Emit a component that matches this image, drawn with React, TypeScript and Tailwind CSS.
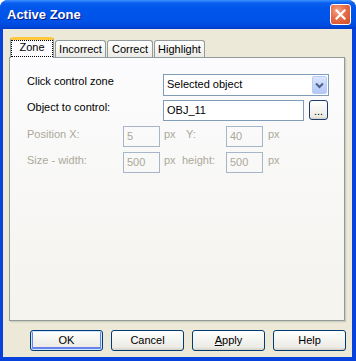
import React from 'react';

const tabs = ['Zone', 'Incorrect', 'Correct', 'Highlight'];

const XpButton: React.FC<{ label: React.ReactNode; isDefault?: boolean }> = ({ label, isDefault }) => (
  <button
    className={
      'w-[73px] h-[21px] rounded-[3px] border border-[#003C74] text-[11px] text-black leading-none ' +
      'bg-[linear-gradient(to_bottom,#FFFFFF_0%,#F4F4F0_45%,#ECEBE6_85%,#D6D0C5_100%)] ' +
      (isDefault ? 'shadow-[inset_0_0_0_1px_#CEE7FF,inset_0_-1px_0_2px_#6982EE]' : '')
    }
  >
    {label}
  </button>
);

const DisabledBox: React.FC<{ value: string }> = ({ value }) => (
  <div className="w-[37px] h-[21px] border border-[#A7B5C8] flex items-center px-[3px] text-[#ACA899]">
    {value}
  </div>
);

const App: React.FC = () => {
  return (
    <div className="w-[356px] h-[361px] bg-white font-['Liberation_Sans',Arial,sans-serif] text-[11px] text-black">
      <div className="w-full h-full flex flex-col rounded-t-[8px] overflow-hidden bg-[#0842DC]">
        {/* title bar */}
        <div className="h-[29px] shrink-0 flex items-center justify-between pl-[7px] pr-[5px] bg-[linear-gradient(to_bottom,#3D95FF_0%,#0A5FF0_10%,#0055EA_30%,#0053E8_70%,#0048DC_90%,#003DC9_100%)]">
          <span className="text-white font-bold text-[13px] [text-shadow:1px_1px_0_#0A1883]">Active Zone</span>
          <div className="w-[21px] h-[21px] rounded-[3px] border border-white flex items-center justify-center bg-[radial-gradient(circle_at_35%_30%,#F4A58A_0%,#E8704C_40%,#D24A25_100%)]">
            <svg width="11" height="11" viewBox="0 0 11 11">
              <path d="M1.5 1.5 L9.5 9.5 M9.5 1.5 L1.5 9.5" stroke="white" strokeWidth="2.2" strokeLinecap="square" />
            </svg>
          </div>
        </div>

        {/* body */}
        <div className="flex-1 flex flex-col bg-[#ECE9D8] ml-[3px] mr-[4px] mb-[4px] pt-[7px]">
          {/* tab strip */}
          <div className="flex items-end gap-[1px] ml-[7px] h-[21px] relative z-10">
            {tabs.map((t, i) =>
              i === 0 ? (
                <div
                  key={t}
                  className="w-[44px] h-[21px] -mb-[1px] rounded-t-[3px] border-x border-[#919B9C] border-t-[3px] border-t-[#FFC83C] bg-[#FCFCFE] flex items-start justify-center pt-[1px]"
                >
                  <span className="w-[40px] h-[15px] text-center leading-[13px] outline outline-1 outline-dotted outline-black">{t}</span>
                </div>
              ) : (
                <div
                  key={t}
                  className={
                    'h-[17px] rounded-t-[3px] border-x border-t border-[#919B9C] bg-[linear-gradient(to_bottom,#FFFFFF,#F3F3EF_60%,#ECEBE6)] flex items-center justify-center px-[5px] ' +
                    (i === 1 ? 'w-[51px]' : i === 2 ? 'w-[46px]' : 'w-[51px]')
                  }
                >
                  {t}
                </div>
              )
            )}
          </div>

          {/* tab panel */}
          <div className="ml-[6px] mr-[7px] h-[264px] border border-[#919B9C] shadow-[1px_1px_0_#D0CEBF,2px_2px_0_#E3E0D0] bg-[linear-gradient(to_bottom,#FCFCFE,#F4F3EE)] pt-[16px] pl-[17px] flex flex-col gap-[5px]">
            <div className="flex h-[21px]">
              <span className="w-[136px] pt-[1px] leading-[13px]">Click control zone</span>
              <div className="w-[166px] h-[22px] border border-[#7F9DB9] bg-white flex items-center justify-between pl-[3px] pr-[1px]">
                <span className="pb-[1px]">Selected object</span>
                <div className="w-[15px] h-[18px] rounded-[2px] border border-[#B6CBF8] bg-[linear-gradient(to_bottom,#DCE6FD,#C1D3FB_60%,#B4C8F7)] flex items-center justify-center">
                  <svg width="9" height="7" viewBox="0 0 9 7">
                    <path d="M1 1.5 L4.5 5 L8 1.5" fill="none" stroke="#4D6185" strokeWidth="2" />
                  </svg>
                </div>
              </div>
            </div>

            <div className="flex h-[21px]">
              <span className="w-[136px] pt-[1px] leading-[13px]">Object to control:</span>
              <div className="w-[141px] h-[21px] border border-[#7F9DB9] bg-white flex items-center px-[3px] pb-[1px]">OBJ_11</div>
              <div className="ml-[5px] w-[19px] h-[20px] rounded-[3px] border border-[#1C3B6E] bg-[linear-gradient(to_bottom,#FFFFFF,#ECEBE6_85%,#D6D0C5)] flex items-end justify-center pb-[2px] leading-none">
                ...
              </div>
            </div>

            <div className="flex h-[21px] text-[#ACA899]">
              <span className="w-[96px] pt-[2px] leading-[13px]">Position X:</span>
              <DisabledBox value="5" />
              <span className="w-[22px] pl-[4px] pt-[2px] leading-[13px]">px</span>
              <span className="w-[44px] pl-[4px] pt-[2px] leading-[13px]">Y:</span>
              <DisabledBox value="40" />
              <span className="pl-[5px] pt-[2px] leading-[13px]">px</span>
            </div>

            <div className="flex h-[21px] text-[#ACA899]">
              <span className="w-[96px] pt-[2px] leading-[13px]">Size - width:</span>
              <DisabledBox value="500" />
              <span className="w-[22px] pl-[4px] pt-[2px] leading-[13px]">px</span>
              <span className="w-[44px] pt-[2px] leading-[13px]">height:</span>
              <DisabledBox value="500" />
              <span className="pl-[5px] pt-[2px] leading-[13px]">px</span>
            </div>
          </div>

          {/* buttons */}
          <div className="flex justify-end gap-[8px] pr-[6px] mt-[9px]">
            <XpButton label="OK" isDefault />
            <XpButton label="Cancel" />
            <XpButton label={<><span className="underline">A</span>pply</>} />
            <XpButton label="Help" />
          </div>
        </div>
      </div>
    </div>
  );
};

export default App;
